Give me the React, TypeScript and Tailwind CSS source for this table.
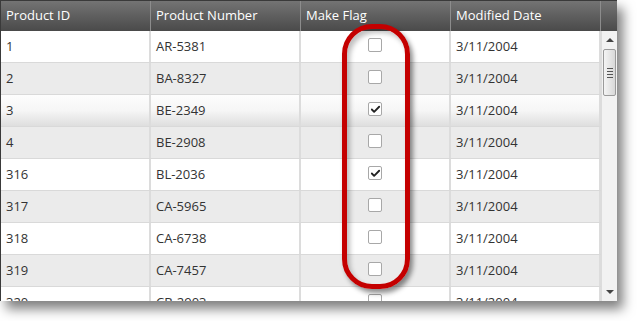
import { Check } from "lucide-react";

type Product = {
  id: number;
  number: string;
  makeFlag: boolean;
  modified: string;
};

const products: Product[] = [
  { id: 1, number: "AR-5381", makeFlag: false, modified: "3/11/2004" },
  { id: 2, number: "BA-8327", makeFlag: false, modified: "3/11/2004" },
  { id: 3, number: "BE-2349", makeFlag: true, modified: "3/11/2004" },
  { id: 4, number: "BE-2908", makeFlag: false, modified: "3/11/2004" },
  { id: 316, number: "BL-2036", makeFlag: true, modified: "3/11/2004" },
  { id: 317, number: "CA-5965", makeFlag: false, modified: "3/11/2004" },
  { id: 318, number: "CA-6738", makeFlag: false, modified: "3/11/2004" },
  { id: 319, number: "CA-7457", makeFlag: false, modified: "3/11/2004" },
  { id: 320, number: "CB-2903", makeFlag: false, modified: "3/11/2004" },
];

const columns = ["Product ID", "Product Number", "Make Flag", "Modified Date"];

export default function App() {
  return (
    <div className="w-[637px] h-[321px] bg-white" style={{ fontFamily: '"Open Sans", "Noto Sans", sans-serif' }}>
      <div className="relative w-[617px] h-[301px] bg-white border-l border-t border-[#3a3a3a] shadow-[6px_8px_11px_rgba(0,0,0,0.5)]">
        {/* Header */}
        <div className="flex h-[30px] bg-gradient-to-b from-[#747474] to-[#4a4a4a] text-white text-[13px]">
          {columns.map((c) => (
            <div key={c} className="w-[150px] flex items-center pl-[5px] border-r border-[#8c8c8c]">
              {c}
            </div>
          ))}
          <div className="flex-1" />
        </div>

        <div className="flex h-[270px]">
          {/* Rows */}
          <div className="w-[600px] overflow-hidden">
            {products.map((p, i) => (
              <Row key={p.id} product={p} index={i} />
            ))}
          </div>

          {/* Scrollbar */}
          <div className="w-[16px] flex flex-col items-center bg-[#f2f2f2] border-l border-[#dcdcdc]">
            <div className="h-[18px] flex items-center justify-center">
              <div className="w-0 h-0 border-l-[4px] border-r-[4px] border-b-[4px] border-l-transparent border-r-transparent border-b-[#444]" />
            </div>
            <div className="w-[13px] h-[47px] rounded-[2px] border border-[#9a9a9a] bg-gradient-to-r from-[#f4f4f4] to-[#d8d8d8] flex flex-col items-center justify-center gap-[2px]">
              <div className="w-[6px] h-px bg-[#555]" />
              <div className="w-[6px] h-px bg-[#555]" />
              <div className="w-[6px] h-px bg-[#555]" />
              <div className="w-[6px] h-px bg-[#555]" />
            </div>
            <div className="flex-1" />
            <div className="h-[18px] flex items-center justify-center">
              <div className="w-0 h-0 border-l-[4px] border-r-[4px] border-t-[4px] border-l-transparent border-r-transparent border-t-[#444]" />
            </div>
          </div>
        </div>

        {/* Highlight around the Make Flag column */}
        <div className="absolute left-[341px] top-[23px] w-[68px] h-[265px] rounded-[30px] border-[5px] border-[#c40000] shadow-[3px_4px_5px_rgba(0,0,0,0.45),inset_3px_4px_5px_rgba(0,0,0,0.25)] pointer-events-none" />
      </div>
    </div>
  );
}

function Row({ product, index }: { product: Product; index: number }) {
  const hovered = index === 2;
  const bg = hovered
    ? "bg-gradient-to-b from-[#fdfdfd] via-[#f6f6f6] to-[#dedede]"
    : index % 2 === 0
      ? "bg-white"
      : "bg-[#ebebeb]";

  return (
    <div className={`flex h-[32px] border-b border-[#d9d9d9] text-[13px] text-[#333] ${bg}`}>
      <div className="w-[150px] flex items-center pl-[5px] border-r-2 border-[#dcdcdc]">{product.id}</div>
      <div className="w-[150px] flex items-center pl-[5px] border-r-2 border-[#dcdcdc]">{product.number}</div>
      <div className="w-[150px] flex items-center justify-center border-r-2 border-[#dcdcdc]">
        <div className="w-[14px] h-[14px] rounded-[2px] border border-[#a8a8a8] bg-white flex items-center justify-center mb-[3px]">
          {product.makeFlag && <Check size={11} strokeWidth={4} className="text-[#222]" />}
        </div>
      </div>
      <div className="w-[150px] flex items-center pl-[5px] border-r-2 border-[#dcdcdc]">{product.modified}</div>
    </div>
  );
}
